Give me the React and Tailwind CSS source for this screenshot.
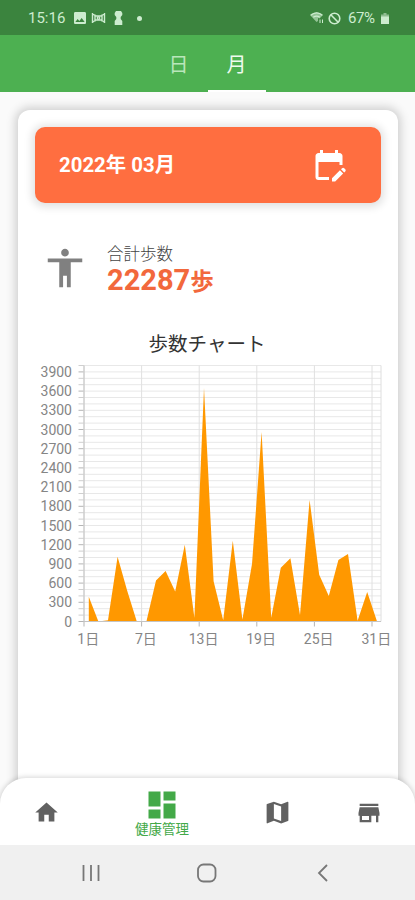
import { useState } from "react";
import clsx from "clsx";
import {
  MdAccessibility,
  MdDashboard,
  MdEditCalendar,
  MdHome,
  MdImage,
} from "react-icons/md";

const steps = [
  385, 0, 20, 1010, 480, 0, 0, 640, 790, 470, 1200, 60, 3650, 630, 20, 1260,
  30, 900, 2960, 60, 840, 990, 100, 1900, 730, 400, 960, 1055, 10, 460, 10,
];

const tabs = [
  { id: "day", label: "日" },
  { id: "month", label: "月" },
];

// chart geometry
const LEFT = 66;
const RIGHT = 363;
const TOP = 5.5;
const BOTTOM = 261.5;
const DAY = 9.6;
const yOf = (value) => BOTTOM - value * 0.064;

const StatusBar = () => (
  <div className="flex h-[35px] shrink-0 items-center bg-[#3b843e] pl-[28px] pr-[26px] pt-[1px] text-[#cdeccf]">
    <span className="w-[38px] text-[15px]">15:16</span>
    <MdImage className="ml-[6px] size-[16px]" />
    <svg className="ml-[3px] h-[12px] w-[15px]" viewBox="0 0 15 12" fill="none" stroke="currentColor" strokeWidth="1.4">
      <path d="M1.500 1v10M4 2.500v7M1 1.500l4 2.500h5l4-2.500M1 10.500L5 8h5l4 2.500M11 2.500v7M13.500 1v10" />
      <circle cx="7.5" cy="6" r="1.2" />
    </svg>
    <svg className="ml-[8px] h-[14px] w-[9px]" viewBox="0 0 9 14" fill="currentColor">
      <path d="M2 0h5l1.300 2v2L6.700 6v2L8.300 10v4H.7v-4l1.600-2V6L.7 4V2z" />
    </svg>
    <span className="ml-[14px] size-[5px] rounded-full bg-current" />
    <svg className="ml-auto h-[12px] w-[14px]" viewBox="0 0 14 12" fill="currentColor">
      <path d="M0 3C4-.6 9-.6 13 3L9.500 6.500 8 6v3L6.500 10z" opacity=".6" />
      <path d="M.8 3.200C4.500.3 9 .3 12.300 3.200M3.300 5.300c2-1.400 4.500-1.400 6.500 0" fill="none" stroke="currentColor" strokeWidth="1.200" />
      <path d="M9.500 7.500h1V11h-1zM12 7.500h1V11h-1z" />
    </svg>
    <svg className="ml-[4px] size-[13px]" viewBox="0 0 13 13" fill="none" stroke="currentColor" strokeWidth="1.6">
      <circle cx="6.5" cy="6.5" r="5.3" />
      <path d="M2.800 2.800l7.400 7.400" />
    </svg>
    <span className="ml-[7px] w-[28px] text-[15px] tracking-[-0.4px]">67%</span>
    <svg className="ml-[5px] h-[11px] w-[8px]" viewBox="0 0 8 11">
      <path d="M2.500 0h3v1.500H8V4H0V1.500h2.500z" fill="#8fbd91" />
      <path d="M0 3.500h8V11H0z" fill="currentColor" />
    </svg>
  </div>
);

const TabBar = () => {
  const [selected, setSelected] = useState("month");

  return (
    <div className="flex h-[57px] shrink-0 justify-center bg-[#4db051]">
      {tabs.map((tab) => (
        <button
          key={tab.id}
          onClick={() => setSelected(tab.id)}
          className={clsx(
            "h-full w-[58px] border-b-2 pt-[5px] text-[20px]",
            tab.id === selected
              ? "border-white text-[#effbef]"
              : "border-transparent text-[#b9e6bb]"
          )}
        >
          {tab.label}
        </button>
      ))}
    </div>
  );
};

const StepChart = () => {
  const points = steps.map(
    (value, index) => `${LEFT + DAY * (index + 0.5)},${yOf(value)}`
  );
  const area = `${LEFT + DAY / 2},${BOTTOM} ${points.join(" ")} ${
    LEFT + DAY * 30.5
  },${BOTTOM}`;

  return (
    <svg className="block h-[300px] w-[380px]" viewBox="0 0 380 300">
      {Array.from({ length: 41 }, (_, i) => (
        <g key={i}>
          <path d={`M${LEFT} ${yOf(i * 100)}H${RIGHT}`} stroke="#e8e8e8" />
          <path
            d={`M${LEFT - 5.5} ${yOf(i * 100)}H${LEFT}`}
            stroke={i % 3 === 0 ? "#b5b5b5" : "#cfcfcf"}
          />
        </g>
      ))}
      {[0, 6, 12, 18, 24, 30].map((i) => (
        <g key={i}>
          <path d={`M${LEFT + DAY * i} ${TOP}V${BOTTOM}`} stroke="#e0e0e0" />
          <path d={`M${LEFT + DAY * i} ${BOTTOM}v5`} stroke="#b5b5b5" />
          <text
            x={LEFT + DAY * (i + 0.5) - 0.5}
            y="284"
            textAnchor="middle"
            fontSize="14"
            fill="#858585"
          >
            {i + 1}日
          </text>
        </g>
      ))}
      {Array.from({ length: 14 }, (_, i) => (
        <text
          key={i}
          x="54"
          y={yOf(i * 300) + 5}
          textAnchor="end"
          fontSize="14"
          fill="#858585"
        >
          {i * 300}
        </text>
      ))}
      <path d={`M${RIGHT} ${TOP}V${BOTTOM}`} stroke="#dedede" />
      <polygon points={area} fill="#ff9800" />
      <path d={`M${LEFT} ${TOP}V${BOTTOM}H${RIGHT}`} stroke="#c4c4c4" fill="none" />
    </svg>
  );
};

const BottomNav = () => (
  <div className="z-10 grid h-[67px] shrink-0 grid-cols-[93px_138px_92px_92px] rounded-t-[26px] bg-white text-[#616161] shadow-[0_0_5px_1px_rgba(0,0,0,0.16)]">
    <button className="flex items-center justify-center pt-[2px]">
      <MdHome className="size-[27px]" />
    </button>
    <button className="flex flex-col items-center pt-[9px] text-[#43a948]">
      <MdDashboard className="size-[36px]" />
      <span className="-mt-[3px] text-[13.5px] leading-[18px]">健康管理</span>
    </button>
    <button className="flex items-center justify-center pt-[2px]">
      <svg className="size-[29px]" viewBox="0 0 24 24" fill="currentColor">
        <path d="M20.500 3l-.16.03L15 5.100 9 3 3.360 4.900c-.21.070-.36.250-.36.480V20.500c0 .28.220.5.500.5l.16-.03L9 18.900l6 2.100 5.640-1.900c.21-.07.36-.25.36-.48V3.500c0-.28-.22-.5-.5-.5zM15 19l-6-2.110V5l6 2.110V19z" />
      </svg>
    </button>
    <button className="flex items-center justify-center pt-[2px]">
      <svg className="size-[28px]" viewBox="0 0 24 24" fill="currentColor">
        <path d="M20 4H4v2h16V4zM4 7h16l1 5v2.300H3V12z" />
        <path d="M4 13h10v7H4zM6 14.500V18h6v-3.500zM18 13h2v7h-2z" fillRule="evenodd" />
      </svg>
    </button>
  </div>
);

const SystemNav = () => (
  <div className="z-10 h-[55px] shrink-0 bg-[#f0f0f0]">
    <svg className="h-[55px] w-[415px]" viewBox="0 0 415 55" fill="none" stroke="#777" strokeWidth="1.8">
      <path d="M83.500 20v16M91 20v16M98.500 20v16" />
      <rect x="198" y="19.5" width="17.5" height="17" rx="5.5" />
      <path d="M327 20l-8 8 8 8" />
    </svg>
  </div>
);

const App = () => {
  return (
    <div className="flex h-[900px] w-[415px] flex-col overflow-hidden bg-[#fafafa] font-['Roboto','Noto_Sans_CJK_JP',sans-serif]">
      <StatusBar />
      <TabBar />
      <div className="min-h-0 flex-1 px-[18px] pt-[18px]">
        <div className="flex h-[700px] w-[380px] flex-col rounded-[12px] bg-white shadow-[0_0_10px_3px_rgba(0,0,0,0.17)]">
          <div className="mx-[17px] mt-[17px] flex h-[76px] shrink-0 items-center justify-between rounded-[10px] bg-[#ff6e40] pl-[24px] pr-[34px] text-white shadow-[0_1px_9px_3px_rgba(0,0,0,0.12)]">
            <span className="pt-[1px] text-[20.4px] font-bold">2022年 03月</span>
            <MdEditCalendar className="size-[36px]" />
          </div>
          <div className="mt-[40px] flex h-[50px] shrink-0 items-center pl-[24px]">
            <MdAccessibility className="size-[46px] text-[#808080]" />
            <div className="ml-[19px] flex flex-col pt-[3px]">
              <span className="text-[16.5px] font-light leading-[22px] text-[#444]">合計歩数</span>
              <span className="text-[29px] font-bold leading-[28px] text-[#f2683c]">
                22287<span className="text-[23.5px]">歩</span>
              </span>
            </div>
          </div>
          <div className="mt-[38px] h-[29px] shrink-0 pr-[2px] pt-[2px] text-center text-[19.5px] leading-[24px] text-[#333]">
            歩数チャート
          </div>
          <StepChart />
        </div>
      </div>
      <BottomNav />
      <SystemNav />
    </div>
  );
};

export default App;
